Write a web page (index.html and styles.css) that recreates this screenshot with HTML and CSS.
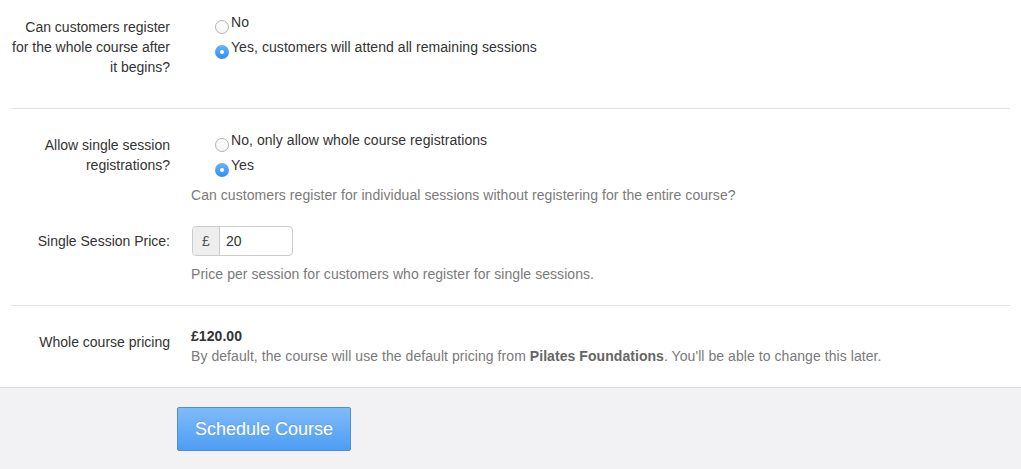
FILE: index.html
```html
<!DOCTYPE html>
<html>
<head>
<meta charset="utf-8">
<link rel="stylesheet" href="styles.css">
</head>
<body>
<div class="form">
  <section class="section s1">
    <div class="group">
      <div class="label">Can customers register<br>for the whole course after<br>it begins?</div>
      <div class="field">
        <label class="radio"><span class="circle"></span><span>No</span></label>
        <label class="radio"><span class="circle on"></span><span>Yes, customers will attend all remaining sessions</span></label>
      </div>
    </div>
  </section>
  <section class="section s2">
    <div class="group">
      <div class="label">Allow single session<br>registrations?</div>
      <div class="field">
        <label class="radio"><span class="circle"></span><span>No, only allow whole course registrations</span></label>
        <label class="radio"><span class="circle on"></span><span>Yes</span></label>
        <p class="help help-a">Can customers register for individual sessions without registering for the entire course?</p>
      </div>
    </div>
    <div class="group price-group">
      <div class="label label-price">Single Session Price:</div>
      <div class="field">
        <div class="input-group"><span class="addon">£</span><span class="input">20</span></div>
        <p class="help help-b">Price per session for customers who register for single sessions.</p>
      </div>
    </div>
  </section>
  <section class="section s3">
    <div class="group">
      <div class="label label-whole">Whole course pricing</div>
      <div class="field">
        <div class="amount">£120.00</div>
        <p class="help help-c">By default, the course will use the default pricing from <b>Pilates Foundations</b>. You'll be able to change this later.</p>
      </div>
    </div>
  </section>
</div>
<footer class="footer">
  <button class="btn">Schedule Course</button>
</footer>
</body>
</html>
```
FILE: styles.css
```css
html, body {
  margin: 0;
  padding: 0;
  background: #fff;
}
body {
  font-family: "Liberation Sans", Arial, sans-serif;
  font-size: 14px;
  line-height: 20px;
  color: #333;
  width: 1021px;
  height: 469px;
  overflow: hidden;
}
.form {
  padding: 0 11px;
}
.section {
  border-bottom: 1px solid #e3e3e3;
}
.s1 { padding: 12px 0 31px; }
.s2 { padding: 21px 0 21px; }
.s3 { padding: 20px 0 21px; border-bottom: none; }
.group {
  display: grid;
  grid-template-columns: 159px 1fr;
  column-gap: 21px;
  align-items: start;
}
.label {
  text-align: right;
  padding-top: 5px;
  white-space: nowrap;
}
.label-price { padding-top: 5px; }
.label-whole { padding-top: 6px; }
.field {
  display: flex;
  flex-direction: column;
  align-items: flex-start;
  letter-spacing: 0.06px;
}
.radio {
  display: flex;
  align-items: flex-start;
  padding-left: 24px;
  height: 25px;
  cursor: pointer;
}
.circle {
  box-sizing: border-box;
  width: 14px;
  height: 14px;
  margin-top: 8px;
  margin-right: 2px;
  border-radius: 50%;
  border: 1px solid #b4b4b4;
  background: linear-gradient(#ffffff, #f4f4f4);
  flex: none;
  position: relative;
}
.circle.on {
  border: none;
  background: linear-gradient(#6cb3fa, #2c8ef8);
}
.circle.on::after {
  content: "";
  position: absolute;
  left: 5px;
  top: 5px;
  width: 4px;
  height: 4px;
  border-radius: 50%;
  background: #fff;
}
.help {
  margin: 0;
  color: #7a7a7a;
}
.help-a { margin-top: 5px; }
.help-b { margin-top: 8px; }
.help-c { margin-top: 0; }
.help b { color: #666; }
.price-group {
  margin-top: 21px;
}
.input-group {
  display: flex;
  width: 101px;
  height: 30px;
  box-sizing: border-box;
  border: 1px solid #ccc;
  border-radius: 4px;
  overflow: hidden;
  margin-left: 1px;
}
.addon {
  width: 26px;
  background: #eee;
  border-right: 1px solid #ccc;
  text-align: center;
  line-height: 28px;
  color: #555;
}
.input {
  padding-left: 6px;
  line-height: 28px;
  color: #333;
}
.amount {
  font-weight: bold;
  color: #333;
}
.footer {
  border-top: 1px solid #dcdcdc;
  background: #f2f2f4;
  padding: 19px 0 0 177px;
  height: 81px;
}
.btn {
  width: 174px;
  height: 44px;
  border: 1px solid #4a8fe0;
  border-radius: 2px;
  background: linear-gradient(#80bbf9, #4e9df3);
  color: #fff;
  font-family: "Liberation Sans", Arial, sans-serif;
  font-size: 18px;
  text-shadow: 0 -1px 0 rgba(0,0,0,0.1);
  padding: 0;
  cursor: pointer;
}
```
